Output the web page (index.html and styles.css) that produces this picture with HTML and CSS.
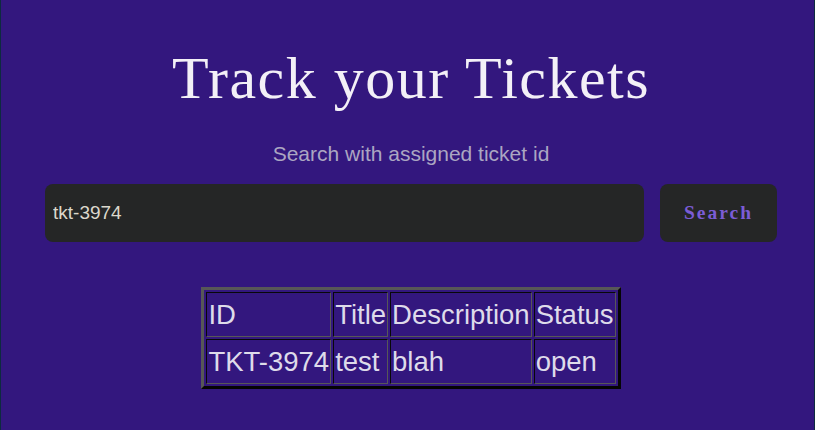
FILE: index.html
```html
<!DOCTYPE html>
<html lang="en">
<head>
<meta charset="utf-8">
<title>Track your Tickets</title>
<link rel="stylesheet" href="styles.css">
</head>
<body>
<div class="page">
  <main class="main">
    <h1 class="title">Track your Tickets</h1>
    <p class="subtitle">Search with assigned ticket id</p>
    <form class="search" onsubmit="return false">
      <input class="search-input" type="text" value="tkt-3974">
      <button class="search-btn" type="submit">Search</button>
    </form>
    <table class="tickets">
      <tr>
        <td class="cell">ID</td>
        <td class="cell">Title</td>
        <td class="cell">Description</td>
        <td class="cell">Status</td>
      </tr>
      <tr>
        <td class="cell">TKT-3974</td>
        <td class="cell">test</td>
        <td class="cell">blah</td>
        <td class="cell">open</td>
      </tr>
    </table>
  </main>
</div>
</body>
</html>
```

FILE: styles.css
```css
html, body {
  margin: 0;
  padding: 0;
  background: #33177e;
}

.page {
  box-sizing: border-box;
  min-height: 430px;
  border-left: 1px solid #0e2a40;
  border-right: 1px solid #0e2a40;
  background: #33177e;
  overflow: hidden;
}

.main {
  display: flex;
  flex-direction: column;
  align-items: center;
  padding: 44px 37px 0 44px;
}

.title {
  margin: 0;
  font-family: "Liberation Serif", "Times New Roman", serif;
  font-weight: normal;
  font-size: 60px;
  line-height: 69px;
  letter-spacing: 1.5px;
  color: #f3f0f7;
}

.subtitle {
  margin: 29px 0 0;
  font-family: "Liberation Sans", Arial, sans-serif;
  font-size: 21px;
  line-height: 24px;
  color: #aba6c2;
}

.search {
  display: flex;
  gap: 16px;
  width: 100%;
  margin-top: 18px;
}

.search-input {
  flex: 1;
  box-sizing: border-box;
  height: 58px;
  margin: 0;
  padding: 0 8px;
  border: none;
  border-radius: 8px;
  background: #252626;
  color: #dcd8cc;
  font-family: "Liberation Sans", Arial, sans-serif;
  font-size: 19px;
  outline: none;
}

.search-btn {
  box-sizing: border-box;
  width: 117px;
  height: 58px;
  margin: 0;
  padding: 0;
  border: none;
  border-radius: 8px;
  background: #252626;
  color: #7b5cd6;
  font-family: "Liberation Serif", "Times New Roman", serif;
  font-weight: bold;
  font-size: 19.5px;
  letter-spacing: 2px;
  cursor: pointer;
}

.tickets {
  margin-top: 45px;
  border-collapse: separate;
  border-spacing: 2px;
  border-style: solid;
  border-width: 3px;
  border-color: #575757 #050505 #050505 #575757;
  font-family: "Liberation Sans", Arial, sans-serif;
  font-size: 27.5px;
  color: #dedbea;
}

.cell {
  padding: 6px 1px;
  line-height: 31px;
  border-style: solid;
  border-width: 1px;
  border-color: #080808 #575757 #575757 #080808;
  text-align: left;
}
```
